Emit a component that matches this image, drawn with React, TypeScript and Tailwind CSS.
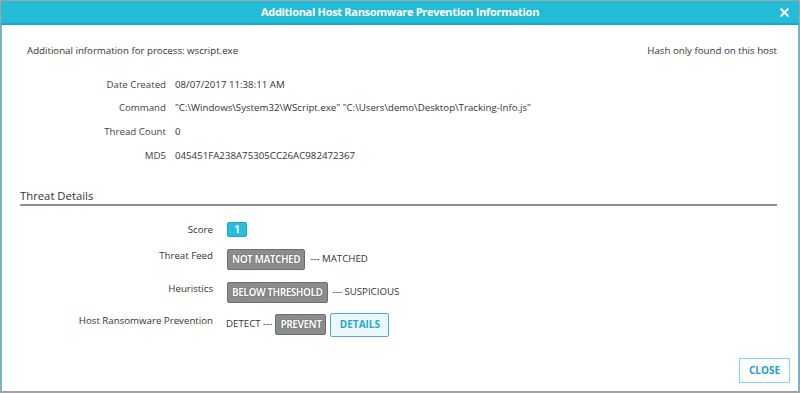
import { X } from 'lucide-react'

const info = [
  { label: 'Date Created', value: '08/07/2017 11:38:11 AM' },
  {
    label: 'Command',
    value: '"C:\\Windows\\System32\\WScript.exe" "C:\\Users\\demo\\Desktop\\Tracking-Info.js"',
  },
  { label: 'Thread Count', value: '0' },
  { label: 'MD5', value: '045451FA238A75305CC26AC982472367' },
]

function GrayBadge({ children }: { children: React.ReactNode }) {
  return (
    <span className="inline-flex h-[21px] items-center rounded-[2px] border border-[#6e6e6e] bg-[#8c8c8c] px-[4px] text-[10px] font-bold tracking-[-0.5px] text-white [text-shadow:0_0_1px_#222]">
      {children}
    </span>
  )
}

export default function App() {
  return (
    <div className="w-[800px] h-[393px] bg-white font-['Open_Sans',sans-serif] text-[#333]">
      <div className="flex h-full flex-col border border-b-2 border-[#a3a3a3]">
        {/* Header */}
        <div className="relative flex h-[24px] shrink-0 items-center justify-center border-b-2 border-[#16a9c4] bg-[#22bcd7]">
          <h2 className="text-[11px] font-bold tracking-[-0.3px] text-white">
            Additional Host Ransomware Prevention Information
          </h2>
          <X className="absolute right-[8px] top-[5px] h-[13px] w-[13px] text-white" strokeWidth={4} />
        </div>

        {/* Body */}
        <div className="flex flex-1 flex-col border-l border-r border-[#4fc3dc] px-[18px] text-[9.7px]">
          <div className="mt-[19px] flex justify-between pl-[7px] pr-[3px]">
            <span>Additional information for process: wscript.exe</span>
            <span>Hash only found on this host</span>
          </div>

          <div className="mt-[14px] grid grid-cols-[146px_1fr] gap-x-[9px]">
            {info.map((row, idx) => (
              <div key={row.label} className="contents">
                <div className={`text-right leading-[24px] text-[#444] ${idx === 0 ? 'h-[23px]' : 'h-[24px]'}`}>{row.label}</div>
                <div className={`leading-[24px] ${idx === 0 ? 'h-[23px]' : 'h-[24px]'}`}>{row.value}</div>
              </div>
            ))}
          </div>

          {/* Threat Details */}
          <div className="mt-[20px] mr-[3px] border-b-2 border-[#8f8f8f] text-[11.3px] leading-[16px] text-[#333]">
            Threat Details
          </div>

          <div className="mt-[16px] grid grid-cols-[193px_1fr] gap-x-[14px] gap-y-[12px]">
            <div className="pt-[1px] text-right leading-[14px]">Score</div>
            <div>
              <span className="inline-flex h-[15px] w-[20px] items-center justify-center rounded-[2px] border border-[#1ea8c4] bg-[#27bddb] text-[10px] font-bold text-white">
                1
              </span>
            </div>

            <div className="text-right leading-[14px]">Threat Feed</div>
            <div className="flex items-center gap-[5px]">
              <GrayBadge>NOT MATCHED</GrayBadge>
              <span>--- MATCHED</span>
            </div>

            <div className="text-right leading-[14px]">Heuristics</div>
            <div className="flex items-center gap-[5px]">
              <GrayBadge>BELOW THRESHOLD</GrayBadge>
              <span>--- SUSPICIOUS</span>
            </div>

            <div className="-mt-[1px] text-right leading-[14px]">Host Ransomware Prevention</div>
            <div className="-mt-[1px] flex h-[21px] items-center">
              <span className="mr-[3px] -ml-[1px]">DETECT ---</span>
              <GrayBadge>PREVENT</GrayBadge>
              <span className="ml-[4px] inline-flex h-[24px] w-[59px] shrink-0 items-center justify-center rounded-[2px] border border-[#4aa9e6] bg-[#ecf7fb] text-[10px] font-bold text-[#1daacb]">
                DETAILS
              </span>
            </div>
          </div>

          <div className="mt-auto mb-[8px] flex justify-end">
            <span className="mr-[-10px] inline-flex h-[25px] w-[51px] items-center justify-center border border-[#7fd8ea] text-[10px] font-bold text-[#1aa2c4]">
              CLOSE
            </span>
          </div>
        </div>
      </div>
    </div>
  )
}
